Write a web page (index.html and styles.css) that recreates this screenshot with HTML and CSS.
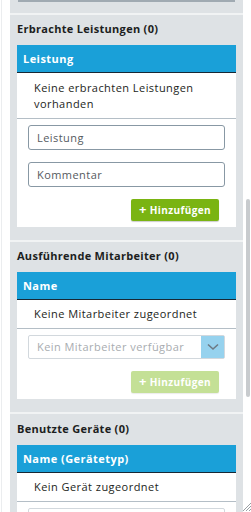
FILE: index.html
```html
<!DOCTYPE html>
<html lang="de">
<head>
  <meta charset="UTF-8" />
  <title>Auftrag</title>
  <link rel="stylesheet" href="styles.css">
</head>
<body>
  <div class="frame">
    <div class="gutter"></div>

    <div class="panel">
      <div class="prev-edge"></div>

      <div class="section">
        <h3 class="section-title">Erbrachte Leistungen (0)</h3>
        <div class="table">
          <div class="table-head">Leistung</div>
          <div class="table-row two-line">Keine erbrachten Leistungen vorhanden</div>
          <div class="table-form">
            <input class="field" type="text" placeholder="Leistung">
            <input class="field" type="text" placeholder="Kommentar">
            <div class="actions">
              <button class="btn-add"><span class="plus">+</span> Hinzufügen</button>
            </div>
          </div>
        </div>
      </div>

      <div class="section">
        <h3 class="section-title">Ausführende Mitarbeiter (0)</h3>
        <div class="table">
          <div class="table-head">Name</div>
          <div class="table-row">Keine Mitarbeiter zugeordnet</div>
          <div class="table-form">
            <div class="select">
              <span class="select-text">Kein Mitarbeiter verfügbar</span>
              <span class="select-arrow">
                <svg width="12" height="8" viewBox="0 0 12 8"><path d="M1 1.5 L6 6 L11 1.5" fill="none" stroke="#6d7a84" stroke-width="1.6"/></svg>
              </span>
            </div>
            <div class="actions">
              <button class="btn-add" disabled><span class="plus">+</span> Hinzufügen</button>
            </div>
          </div>
        </div>
      </div>

      <div class="section">
        <h3 class="section-title">Benutzte Geräte (0)</h3>
        <div class="table">
          <div class="table-head">Name (Gerätetyp)</div>
          <div class="table-row">Kein Gerät zugeordnet</div>
          <div class="table-form">
            <div class="select"></div>
          </div>
        </div>
      </div>
    </div>

    <div class="scrollbar">
      <div class="thumb"></div>
      <svg class="grip" width="8" height="10" viewBox="0 0 8 10">
        <path d="M8 2 L0 10 M8 5 L3 10 M8 8 L6 10" stroke="#9aa0a5" stroke-width="1"/>
      </svg>
    </div>
  </div>
</body>
</html>
```

FILE: styles.css
```css
* {
  box-sizing: border-box;
  margin: 0;
  padding: 0;
}

body {
  background-color: rgb(255, 255, 255);
  font-family: "Open Sans", Arial, sans-serif;
  letter-spacing: 0.45px;
  color: rgb(28, 30, 33);
  height: 512px;
  overflow: hidden;
}

.frame {
  display: flex;
  height: 512px;
}

.gutter {
  width: 9px;
  border-left: 1px solid rgb(235, 237, 239);
  margin-left: 1px;
}

.panel {
  width: 234px;
  background-color: rgb(222, 226, 229);
  overflow: hidden;
}

.prev-edge {
  height: 2px;
  margin: 0 8px 11px 8px;
  background-color: rgb(160, 170, 178);
}

.section {
  border-top: 2px solid rgb(241, 243, 244);
  padding: 6px 7px 13px 7px;
}

.section + .section + .section {
  padding-top: 7px;
}

.section-title {
  font-size: 11px;
  font-weight: 700;
  letter-spacing: 0.3px;
  line-height: 16px;
  margin-bottom: 8px;
}

.table {
  background-color: rgb(255, 255, 255);
}

.table-head {
  background-color: rgb(26, 160, 216);
  color: rgb(255, 255, 255);
  font-size: 11px;
  font-weight: 700;
  height: 28px;
  line-height: 27px;
  padding-left: 6px;
  border-bottom: 1px solid rgb(24, 40, 52);
}

.table-row {
  font-size: 11px;
  line-height: 16px;
  padding: 6px 14px 6px 17px;
  border-bottom: 1px solid rgb(180, 190, 198);
}

.table-row.two-line {
  padding-top: 7px;
  padding-bottom: 6px;
}

.table-form {
  display: flex;
  flex-direction: column;
  gap: 12px;
  padding: 6px 11px 6px 11px;
}

.field {
  height: 25px;
  border: 1px solid rgb(136, 152, 164);
  border-radius: 3px;
  padding-left: 8px;
  font-family: "Open Sans", Arial, sans-serif;
  font-size: 11px;
  letter-spacing: 0.45px;
  color: rgb(60, 64, 70);
}

.field::placeholder {
  color: rgb(85, 90, 96);
}

.actions {
  display: flex;
  justify-content: flex-end;
  padding-right: 6px;
}

.btn-add {
  width: 88px;
  height: 22px;
  border: none;
  border-radius: 2px;
  background-color: rgb(122, 180, 18);
  color: rgb(255, 255, 255);
  font-family: "Open Sans", Arial, sans-serif;
  font-size: 10px;
  font-weight: 700;
  letter-spacing: 0.4px;
  box-shadow: 0px 1px 1px rgba(0, 0, 0, 0.2);
}

.plus {
  font-size: 13px;
  line-height: 10px;
}

.btn-add:disabled {
  background-color: rgb(196, 224, 150);
  box-shadow: 0px 1px 1px rgba(0, 0, 0, 0.08);
}

.select {
  display: flex;
  height: 24px;
  border: 1px solid rgb(210, 216, 221);
  border-radius: 2px;
}

.select-text {
  flex: 1;
  font-size: 11px;
  line-height: 22px;
  padding-left: 8px;
  color: rgb(168, 172, 176);
}

.select-arrow {
  width: 23px;
  background-color: rgb(150, 210, 238);
  display: flex;
  align-items: center;
  justify-content: center;
}

.scrollbar {
  width: 8px;
  display: flex;
  flex-direction: column;
  align-items: flex-end;
  padding-top: 199px;
}

.thumb {
  width: 4px;
  height: 198px;
  margin-right: 1px;
  background-color: rgb(200, 203, 206);
  border-radius: 2px;
}

.grip {
  margin-top: auto;
  margin-bottom: 1px;
}
```
